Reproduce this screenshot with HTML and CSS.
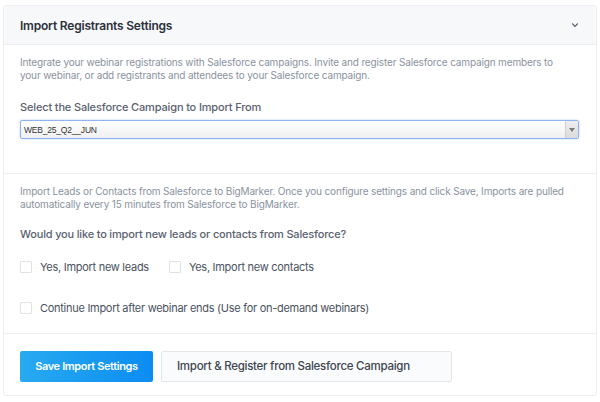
FILE: index.html
```html
<!DOCTYPE html>
<html>
<head>
<meta charset="utf-8">
<link rel="stylesheet" href="styles.css">
</head>
<body>
<div class="card">
  <div class="card-header">
    <h2 class="title">Import Registrants Settings</h2>
    <svg class="chevron" width="8" height="6" viewBox="0 0 8 6"><path d="M1.2 1.5 L4 4.3 L6.8 1.5" fill="none" stroke="#5a6170" stroke-width="1.2"/></svg>
  </div>
  <div class="section section-top">
    <p class="desc">Integrate your webinar registrations with Salesforce campaigns. Invite and register Salesforce campaign members to your webinar, or add registrants and attendees to your Salesforce campaign.</p>
    <div class="label">Select the Salesforce Campaign to Import From</div>
    <div class="select">
      <span class="select-value">WEB_25_Q2__JUN</span>
      <span class="select-arrow"><svg width="6" height="4" viewBox="0 0 6 4"><path d="M0 0 L6 0 L3 4 Z" fill="#7a7a7a"/></svg></span>
    </div>
  </div>
  <div class="section section-mid">
    <p class="desc">Import Leads or Contacts from Salesforce to BigMarker. Once you configure settings and click Save, Imports are pulled automatically every 15 minutes from Salesforce to BigMarker.</p>
    <div class="label label-q">Would you like to import new leads or contacts from Salesforce?</div>
    <div class="checks">
      <label class="check"><span class="box"></span>Yes, Import new leads</label>
      <label class="check"><span class="box"></span>Yes, Import new contacts</label>
    </div>
    <div class="checks checks-last">
      <label class="check"><span class="box"></span>Continue Import after webinar ends (Use for on-demand webinars)</label>
    </div>
  </div>
  <div class="footer">
    <button class="btn btn-primary">Save Import Settings</button>
    <button class="btn btn-secondary">Import &amp; Register from Salesforce Campaign</button>
  </div>
</div>
</body>
</html>
```
FILE: styles.css
```css
* { box-sizing: border-box; }
html, body { margin: 0; padding: 0; background: #fff; }
body {
  font-family: Inter, "Open Sans", sans-serif;
  color: #4a5260;
  padding: 5px 4px 0 3px;
}
.card {
  border: 1px solid #eceef1;
  border-radius: 3px;
  width: 594px;
  height: 391px;
  display: flex;
  flex-direction: column;
}
.card-header {
  height: 39px;
  background: #f7f8fa;
  border-bottom: 1px solid #eceef1;
  display: flex;
  align-items: center;
  justify-content: space-between;
  padding: 0 17px 0 16px;
}
.title {
  margin: 0;
  font-size: 12px;
  letter-spacing: -0.2px;
  font-weight: 600;
  color: #2b303b;
}
.chevron { display: block; }
.section {
  padding: 0 16px;
  border-bottom: 1px solid #eceef1;
}
.section-top { height: 129px; padding-top: 11px; }
.section-mid { height: 160px; padding-top: 11px; }
.desc {
  margin: 0;
  max-width: 550px;
  font-size: 10px;
  letter-spacing: -0.15px;
  line-height: 13px;
  color: #8a929e;
}
.label {
  font-size: 11px;
  letter-spacing: -0.15px;
  font-weight: 500;
  color: #5a6270;
  margin-top: 18px;
}
.label-q { margin-top: 16px; letter-spacing: -0.18px; }
.select {
  margin-top: 6px;
  height: 19px;
  border: 1px solid #8fb4ef;
  border-radius: 2px;
  box-shadow: 0 0 2px rgba(100,150,230,0.5);
  background: linear-gradient(#ffffff, #f0f0f0);
  display: flex;
  align-items: center;
  justify-content: space-between;
  width: 559px;
}
.select-value {
  font-family: "Liberation Sans", Arial, sans-serif;
  font-size: 8.5px;
  letter-spacing: -0.2px;
  color: #333;
  padding-left: 3px;
}
.select-arrow {
  width: 13px;
  height: 100%;
  background: linear-gradient(#eee, #dcdcdc);
  border-left: 1px solid #d0d0d0;
  display: flex;
  align-items: center;
  justify-content: center;
}
.checks {
  display: flex;
  gap: 20px;
  margin-top: 19px;
}
.checks-last { margin-top: 27px; }
.check {
  display: flex;
  align-items: center;
  font-size: 11px;
  letter-spacing: -0.28px;
  color: #4a5260;
}
.box {
  width: 12px;
  height: 12px;
  border: 1px solid #dfe2e6;
  border-radius: 1px;
  background: #fff;
  margin-right: 8px;
}
.footer {
  display: flex;
  align-items: center;
  gap: 8px;
  padding: 3px 16px 0;
  flex: 1;
}
.btn {
  height: 31px;
  font-family: inherit;
  font-size: 11px;
  border-radius: 2px;
  padding: 0;
  cursor: pointer;
}
.btn-primary {
  width: 133px;
  font-weight: 600;
  letter-spacing: -0.38px;
  color: #fff;
  background: linear-gradient(90deg, #28aaf0, #0b8cf2);
  border: none;
}
.btn-secondary {
  width: 291px;
  text-align: left;
  padding-left: 15px;
  font-size: 11.5px;
  font-weight: 500;
  letter-spacing: -0.27px;
  color: #3d4450;
  background: #fafbfc;
  border: 1px solid #e3e6ea;
}
```
